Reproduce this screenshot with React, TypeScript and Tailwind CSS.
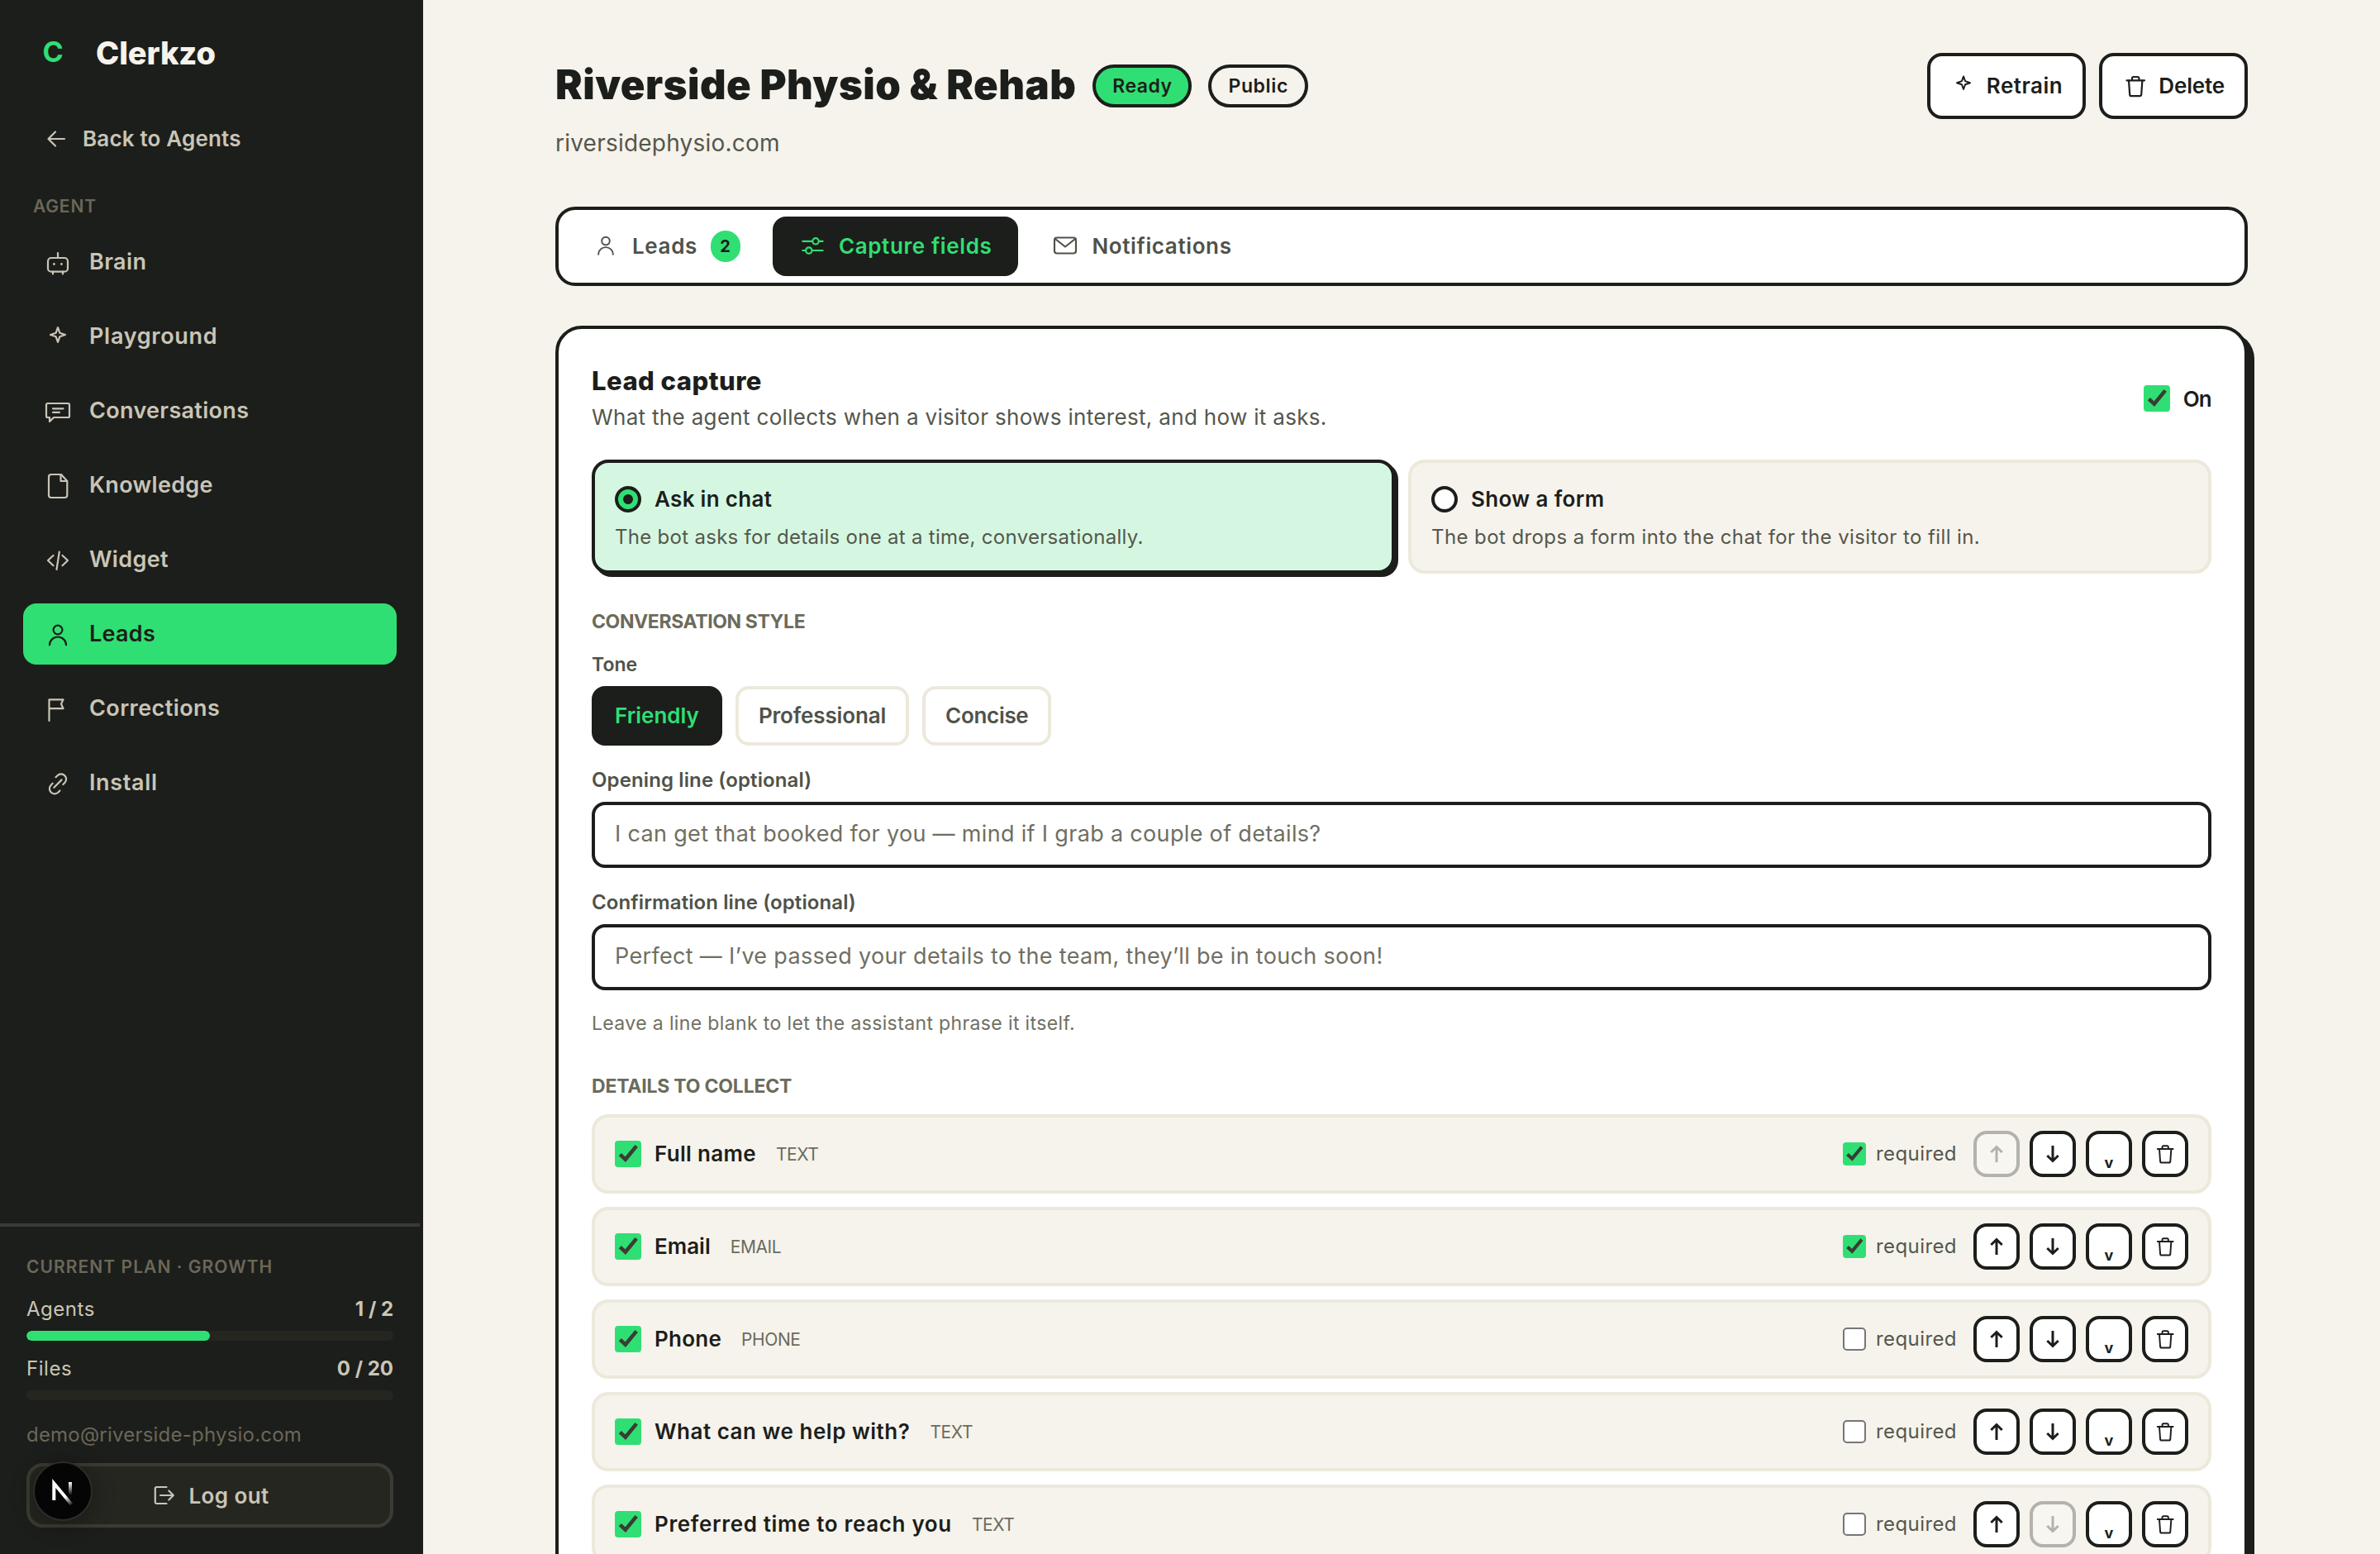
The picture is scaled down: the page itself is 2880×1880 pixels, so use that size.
import type { ReactNode } from "react"
import clsx from "clsx"

type IconProps = { className?: string }

const Svg = ({ size, className, children }: { size: number; className?: string; children: ReactNode }) => (
  <svg
    viewBox={`0 0 ${size} ${size}`}
    fill="none"
    stroke="currentColor"
    strokeWidth={2.2}
    strokeLinecap="round"
    strokeLinejoin="round"
    className={clsx("shrink-0", className)}
  >
    {children}
  </svg>
)

const BotIcon = ({ className }: IconProps) => (
  <Svg size={36} className={className}>
    <rect x="6" y="13" width="24" height="16.7" rx="4" />
    <path d="M18 7v6M12 29.7v2.8M24 29.7v2.8" />
    <circle cx="13.4" cy="20.5" r="1.4" fill="currentColor" stroke="none" />
    <circle cx="22.4" cy="20.5" r="1.4" fill="currentColor" stroke="none" />
  </Svg>
)

const SparkIcon = ({ className }: IconProps) => (
  <Svg size={36} className={className}>
    <path d="M18 7.2l2.3 6.5 6.7 2.3-6.7 2.3-2.3 6.5-2.3-6.5L9 16l6.7-2.3z" />
  </Svg>
)

const ChatIcon = ({ className }: IconProps) => (
  <Svg size={36} className={className}>
    <path d="M5.5 9h25a1.5 1.5 0 0 1 1.5 1.5v14a1.5 1.5 0 0 1-1.5 1.5H13l-5 5v-5H5.5A1.5 1.5 0 0 1 4 24.5v-14A1.5 1.5 0 0 1 5.5 9z" />
    <path d="M12 15.3h12.5M12 19.8h8" />
  </Svg>
)

const FileIcon = ({ className }: IconProps) => (
  <Svg size={36} className={className}>
    <path d="M10 5h12l7.3 8v17a3 3 0 0 1-3 3H10a3 3 0 0 1-3-3V8a3 3 0 0 1 3-3z" />
    <path d="M21.5 5.5V13H29" />
  </Svg>
)

const CodeIcon = ({ className }: IconProps) => (
  <Svg size={36} className={className}>
    <path d="M12.5 13L6 19l6.5 6.3M23.5 13l6.5 6-6.5 6.3M19.8 8.5L16.5 30" />
  </Svg>
)

const UserIcon = ({ className }: IconProps) => (
  <Svg size={36} className={className}>
    <circle cx="18" cy="13" r="5.4" />
    <path d="M8 31.3a10 9.8 0 0 1 20 0" />
  </Svg>
)

const FlagIcon = ({ className }: IconProps) => (
  <Svg size={36} className={className}>
    <path d="M7.5 33V7.3h17L22 12.6l2.5 5.6h-17" />
  </Svg>
)

const LinkIcon = ({ className }: IconProps) => (
  <Svg size={36} className={className}>
    <path d="M15.5 11.2l2-2a6.2 6.2 0 0 1 8.8 8.8l-2 2M20.5 27.5l-2 2a6.2 6.2 0 0 1-8.8-8.8l2-2M13.3 23.7l9.3-9.3" />
  </Svg>
)

const BackIcon = ({ className }: IconProps) => (
  <Svg size={32} className={className}>
    <path d="M26 17H6.5M15 8.5L6.5 17l8.5 8.5" />
  </Svg>
)

const SlidersIcon = ({ className }: IconProps) => (
  <Svg size={32} className={className}>
    <path d="M4.3 10.8h11.5M24 10.8h4.6M4.3 22h3.4M16 22h12.6" />
    <circle cx="20" cy="10.8" r="3.7" />
    <circle cx="11.8" cy="22" r="3.7" />
  </Svg>
)

const MailIcon = ({ className }: IconProps) => (
  <Svg size={32} className={className}>
    <rect x="3" y="6.5" width="26" height="19" rx="3" />
    <path d="M4.5 8.5L16 17.5l11.5-9" />
  </Svg>
)

const TrashIcon = ({ className }: IconProps) => (
  <Svg size={32} className={className}>
    <path d="M5.5 10.3H27M12 10.3V7.8A1.7 1.7 0 0 1 13.7 6h5a1.7 1.7 0 0 1 1.7 1.8v2.5" />
    <path d="M8 10.3l1.2 17a2 2 0 0 0 2 1.9h10a2 2 0 0 0 2-1.9l1.2-17" />
  </Svg>
)

const LogoutIcon = ({ className }: IconProps) => (
  <Svg size={28} className={className}>
    <path d="M17.5 4h-12A1.7 1.7 0 0 0 3.8 5.7v16.6A1.7 1.7 0 0 0 5.5 24h12M10 14h15.5M20.3 8.5l5.5 5.5-5.5 5.5" />
  </Svg>
)

const ArrowIcon = ({ down }: { down?: boolean }) => (
  <svg viewBox="0 0 24 24" fill="none" stroke="currentColor" strokeWidth={3} className={clsx("size-6", down && "rotate-180")}>
    <path d="M12 22V3.5M5.3 10L12 3.5l6.7 6.5" />
  </svg>
)

const navItems = [
  { label: "Brain", icon: BotIcon, tracking: "tracking-[0.015em]" },
  { label: "Playground", icon: SparkIcon, tracking: "tracking-[0.026em]" },
  { label: "Conversations", icon: ChatIcon, tracking: "tracking-[0.012em]" },
  { label: "Knowledge", icon: FileIcon, tracking: "tracking-[0.012em]" },
  { label: "Widget", icon: CodeIcon, tracking: "tracking-[0.012em]" },
  { label: "Leads", icon: UserIcon, tracking: "tracking-[0.01em]", active: true },
  { label: "Corrections", icon: FlagIcon, tracking: "tracking-[0.016em]" },
  { label: "Install", icon: LinkIcon, tracking: "tracking-[0.024em]" },
]

const fields = [
  { name: "Full name", type: "TEXT", required: true, tracking: "tracking-[0.012em]" },
  { name: "Email", type: "EMAIL", required: true, tracking: "tracking-normal" },
  { name: "Phone", type: "PHONE", required: false, tracking: "tracking-[0.01em]" },
  { name: "What can we help with?", type: "TEXT", required: false, tracking: "tracking-[0.02em]" },
  { name: "Preferred time to reach you", type: "TEXT", required: false, tracking: "tracking-[0.025em]" },
]

const Check = ({ checked = true, small }: { checked?: boolean; small?: boolean }) => (
  <span
    className={clsx(
      "block shrink-0",
      small ? "size-7" : "size-8",
      checked ? "rounded-[4px] bg-[#30df73]" : "rounded-[5px] border-2 border-[#767676] bg-white"
    )}
  >
    {checked && (
      <svg viewBox="0 0 32 32" fill="none" stroke="#3a3c35" strokeWidth={4.6}>
        <path d="M6.3 16.6l6.5 6L26.2 6.4" />
      </svg>
    )}
  </span>
)

const Usage = ({ label, value, percent }: { label: string; value: string; percent: number }) => (
  <div>
    <div className="flex h-9 items-center justify-between text-[24px] text-[#c9c5b6]">
      <span className="tracking-[0.022em]">{label}</span>
      <span className="font-bold">{value}</span>
    </div>
    <div className="mt-2 h-3 overflow-hidden rounded-full bg-[#252620]">
      <div className="h-full rounded-full bg-[#30df73]" style={{ width: `${percent}%` }} />
    </div>
  </div>
)

const Sidebar = () => (
  <aside className="flex w-[512px] shrink-0 flex-col bg-[#1c1e1b] pr-1 text-[#c9c5b6]">
    <div className="flex h-32 items-center gap-5 px-8">
      <div className="flex size-16 items-center justify-center pb-[3px] text-[34px] font-bold text-[#30df73]">C</div>
      <span className="text-[38px] font-extrabold tracking-[-0.003em] text-[#f6f3ec]">Clerkzo</span>
    </div>
    <div className="mt-[13px] mb-px flex h-[52px] items-center gap-4 pl-[52px]">
      <BackIcon className="size-8" />
      <span className="text-[26px] font-semibold tracking-[0.007em]">Back to Agents</span>
    </div>
    <div className="mt-9 flex h-9 items-center pt-[3px] pl-10 text-[21px] font-semibold tracking-[0.04em] text-[#6b6759]">
      AGENT
    </div>
    <nav className="mt-[14px] flex flex-col gap-4 px-7">
      {navItems.map(({ label, icon: Icon, tracking, active }) => (
        <a
          key={label}
          className={clsx(
            "flex h-[74px] items-center gap-5 rounded-2xl px-6 text-[27px] font-semibold",
            active && "bg-[#30df73] text-[#1c1e1b]"
          )}
        >
          <Icon className="size-9" />
          <span className={tracking}>{label}</span>
        </a>
      ))}
    </nav>

    <div className="mt-auto h-[400px] border-t-4 border-[#3a3c34] px-8 pt-[30px]">
      <div className="flex h-9 items-center pt-0.5 text-[21px] font-semibold tracking-[0.05em] text-[#6b6759]">
        CURRENT PLAN · GROWTH
      </div>
      <div className="mt-4">
        <Usage label="Agents" value="1 / 2" percent={50} />
      </div>
      <div className="mt-4">
        <Usage label="Files" value="0 / 20" percent={0} />
      </div>
      <div className="mt-6 flex h-9 items-center text-[24px] tracking-[0.009em] text-[#6b6759]">
        demo@riverside-physio.com
      </div>
      <div className="relative mt-4">
        <button className="flex h-[78px] w-full items-center justify-center gap-4 rounded-[20px] border-4 border-[#3a3c34] bg-[#252620] pl-0.5 text-[26px] font-semibold tracking-[0.016em]">
          <LogoutIcon className="size-7" />
          Log out
        </button>
        <div className="absolute -top-0.5 left-2 flex size-[72px] items-center justify-center rounded-full border-2 border-[#2c2d2a] bg-[#050505] shadow-[0_4px_24px_4px_rgba(0,0,0,0.25)]">
          <svg viewBox="0 0 72 72" fill="none" strokeWidth={4} className="size-[72px] shrink-0">
            <defs>
              <linearGradient id="nDiag" x1="40" y1="42" x2="48" y2="53" gradientUnits="userSpaceOnUse">
                <stop stopColor="#fff" />
                <stop offset="1" stopColor="#fff" stopOpacity="0" />
              </linearGradient>
              <linearGradient id="nStem" x1="45" y1="25" x2="45" y2="41" gradientUnits="userSpaceOnUse">
                <stop stopColor="#fff" />
                <stop offset="1" stopColor="#fff" stopOpacity="0" />
              </linearGradient>
            </defs>
            <path d="M25.3 47V26.5L46.5 52" stroke="url(#nDiag)" />
            <path d="M45 25v16" stroke="url(#nStem)" />
          </svg>
        </div>
      </div>
    </div>
  </aside>
)

const HeaderButton = ({ icon, children }: { icon: ReactNode; children: ReactNode }) => (
  <button className="flex h-20 items-center gap-3 rounded-[18px] border-4 border-[#1c1e1b] bg-white px-6 pb-px text-[26px] font-semibold">
    {icon}
    {children}
  </button>
)

const IconButton = ({ disabled, children }: { disabled?: boolean; children: ReactNode }) => (
  <button
    disabled={disabled}
    className="flex size-14 items-center justify-center rounded-2xl border-4 border-[#1c1e1b] bg-white disabled:opacity-30"
  >
    {children}
  </button>
)

const App = () => {
  return (
    <div className="flex h-[1880px] w-[2880px] overflow-hidden bg-[#f6f3ec] font-['Inter','Liberation_Sans',sans-serif] text-[#1c1e1b]">
      <Sidebar />

      <main className="flex-1 pt-16 pr-40 pl-40">
        {/* Agent header */}
        <header className="flex h-[130px] justify-between">
          <div>
            <div className="flex h-20 items-center gap-5">
              <h1 className="pb-[3px] text-[49px] font-black tracking-[0.0095em]">Riverside Physio & Rehab</h1>
              <span className="flex h-[52px] items-center rounded-full border-4 border-[#1c1e1b] bg-[#30df73] px-5 text-[23px] font-semibold tracking-[0.02em]">
                Ready
              </span>
              <span className="flex h-[52px] items-center rounded-full border-4 border-[#1c1e1b] px-5 text-[23px] font-semibold tracking-[0.028em]">
                Public
              </span>
            </div>
            <p className="mt-2 text-[28px] leading-[42px] tracking-[0.008em] text-[#54574c]">riversidephysio.com</p>
          </div>
          <div className="flex gap-4">
            <HeaderButton icon={<SparkIcon className="mb-[3px] size-8" />}>
              <span className="tracking-[0.02em]">Retrain</span>
            </HeaderButton>
            <HeaderButton icon={<TrashIcon className="mb-px size-8" />}>
              <span className="tracking-[-0.006em]">Delete</span>
            </HeaderButton>
          </div>
        </header>

        {/* Tabs */}
        <div className="mt-14 flex h-24 gap-2 rounded-3xl border-4 border-[#1c1e1b] bg-white p-2 text-[26px] font-semibold tracking-[0.024em] text-[#4f5249]">
          <button className="flex items-center gap-4 pr-[31px] pb-px pl-[33px]">
            <UserIcon className="mb-[3px] size-8" />
            Leads
            <span className="flex h-[38px] w-9 items-center justify-center rounded-full bg-[#30df73] text-[20px] font-bold text-[#1c1e1b]">
              2
            </span>
          </button>
          <button className="flex items-center gap-4 rounded-2xl bg-[#1c1e1b] px-8 pb-px text-[#30df73]">
            <SlidersIcon className="mb-0.5 size-8" />
            Capture fields
          </button>
          <button className="flex items-center gap-4 pr-8 pb-px pl-[33px]">
            <MailIcon className="mb-px size-8" />
            Notifications
          </button>
        </div>

        {/* Lead capture card */}
        <section className="mt-12 h-[1700px] rounded-[32px] border-4 border-[#1c1e1b] bg-white p-10 shadow-[8px_8px_0_#1c1e1b]">
          <div className="flex items-center justify-between">
            <div>
              <h2 className="text-[31px] leading-[46px] font-extrabold tracking-[0.015em]">Lead capture</h2>
              <p className="pt-0.5 text-[26px] leading-[38px] tracking-[0.0125em] text-[#54574c]">
                What the agent collects when a visitor shows interest, and how it asks.
              </p>
            </div>
            <div className="flex items-center gap-4 pt-0.5 text-[26px] font-semibold tracking-[-0.03em]">
              <Check />
              On
            </div>
          </div>

          <div className="mt-8 grid grid-cols-2 gap-4">
            <div className="h-[138px] rounded-[20px] border-4 border-[#1c1e1b] bg-[#d5f7e1] p-6 shadow-[4px_4px_0_#1c1e1b]">
              <div className="flex h-10 items-center gap-4 text-[26px] font-semibold tracking-[0.012em]">
                <span className="flex size-8 items-center justify-center rounded-full border-4 border-[#1c1e1b] bg-[#30df73]">
                  <span className="size-3 rounded-full bg-[#1c1e1b]" />
                </span>
                <span className="pb-0.5">Ask in chat</span>
              </div>
              <p className="mt-2 text-[24px] leading-9 tracking-[0.012em] text-[#54574c]">
                The bot asks for details one at a time, conversationally.
              </p>
            </div>
            <div className="h-[138px] rounded-[20px] border-4 border-[#ece9dc] bg-[#f6f3ec] p-6">
              <div className="flex h-10 items-center gap-4 text-[26px] font-semibold tracking-[0.014em]">
                <span className="size-8 rounded-full border-4 border-[#1c1e1b] bg-white" />
                <span className="pb-0.5">Show a form</span>
              </div>
              <p className="mt-2 text-[24px] leading-9 tracking-[0.017em] text-[#54574c]">
                The bot drops a form into the chat for the visitor to fill in.
              </p>
            </div>
          </div>

          <h3 className="mt-10 text-[23px] leading-9 font-bold tracking-[-0.017em] text-[#6b6b5c]">CONVERSATION STYLE</h3>
          <p className="mt-4 text-[23px] leading-9 font-semibold text-[#4f5249]">Tone</p>
          <div className="mt-2 flex gap-4 text-[26px] font-semibold">
            <button className="h-[72px] rounded-2xl border-4 border-[#1c1e1b] bg-[#1c1e1b] px-6 pb-0.5 text-[#30df73]">
              Friendly
            </button>
            <button className="h-[72px] rounded-2xl border-4 border-[#ece9dc] bg-white px-6 pb-0.5 tracking-[-0.006em] text-[#4f5249]">
              Professional
            </button>
            <button className="h-[72px] rounded-2xl border-4 border-[#ece9dc] bg-white px-6 pb-0.5 tracking-[-0.012em] text-[#4f5249]">
              Concise
            </button>
          </div>

          <p className="mt-6 text-[24px] leading-9 font-semibold tracking-[0.005em] text-[#4f5249]">Opening line (optional)</p>
          <div className="mt-2 flex h-20 items-center rounded-2xl border-4 border-[#1c1e1b] px-6 pb-0.5 text-[27px] tracking-[0.012em] text-[#6f6f62]">
            I can get that booked for you — mind if I grab a couple of details?
          </div>
          <p className="mt-6 text-[24px] leading-9 font-semibold tracking-[0.004em] text-[#4f5249]">
            Confirmation line (optional)
          </p>
          <div className="mt-2 flex h-20 items-center rounded-2xl border-4 border-[#1c1e1b] px-6 pb-0.5 text-[27px] tracking-[0.012em] text-[#6f6f62]">
            Perfect — I’ve passed your details to the team, they’ll be in touch soon!
          </div>
          <p className="mt-[22px] text-[23px] leading-9 tracking-[0.016em] text-[#6f6f62]">
            Leave a line blank to let the assistant phrase it itself.
          </p>

          <h3 className="mt-10 text-[23px] leading-9 font-bold tracking-[-0.009em] text-[#6b6b5c]">DETAILS TO COLLECT</h3>
          <div className="mt-4 flex flex-col gap-4">
            {fields.map((field, i) => (
              <div
                key={field.name}
                className="flex h-24 items-center rounded-[20px] border-4 border-[#ece9dc] bg-[#f6f3ec] px-6"
              >
                <Check />
                <span className={clsx("ml-4 pb-px text-[26px] font-semibold", field.tracking)}>{field.name}</span>
                <span className="ml-6 pt-0.5 text-[21px] tracking-[-0.02em] text-[#6b6b5c]">{field.type}</span>
                <div className="ml-auto flex items-center gap-3">
                  <Check small checked={field.required} />
                  <span className="mr-2 text-[24px] tracking-[0.018em] text-[#54574c]">required</span>
                  <IconButton disabled={i === 0}>
                    <ArrowIcon />
                  </IconButton>
                  <IconButton disabled={i === fields.length - 1}>
                    <ArrowIcon down />
                  </IconButton>
                  <IconButton>
                    <span className="pt-[22px] text-[18px] leading-7 font-bold">v</span>
                  </IconButton>
                  <IconButton>
                    <TrashIcon className="mb-0.5 size-7" />
                  </IconButton>
                </div>
              </div>
            ))}
          </div>
        </section>
      </main>
    </div>
  )
}

export default App
